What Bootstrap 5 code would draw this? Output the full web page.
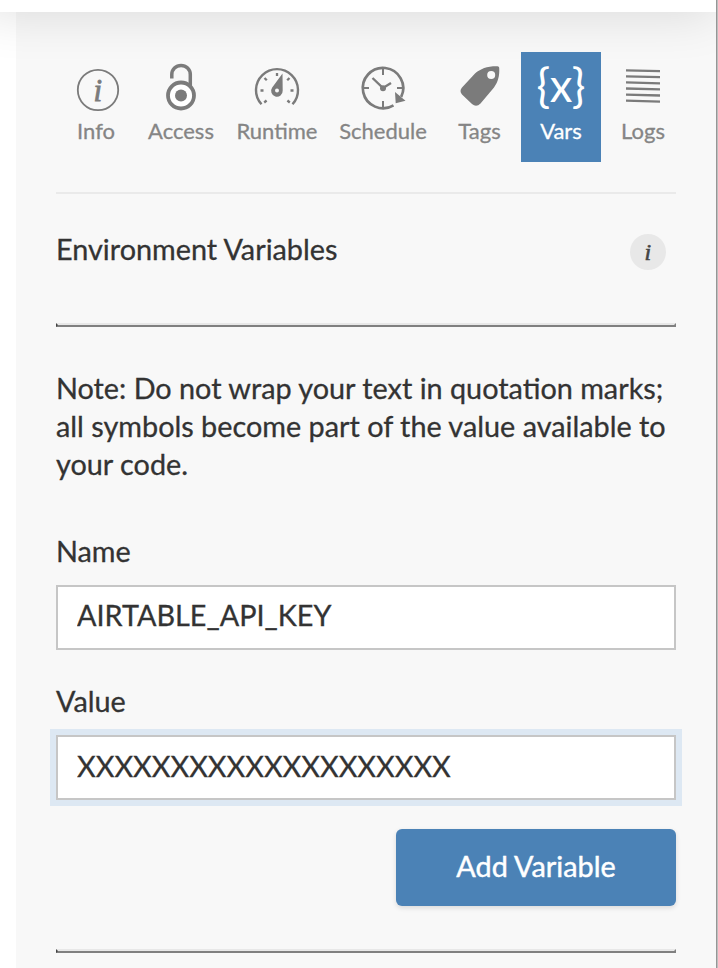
<!DOCTYPE html>
<html lang="en">
<head>
<meta charset="utf-8">
<title>Environment Variables</title>
<link href="https://cdn.jsdelivr.net/npm/bootstrap@5.3.0/dist/css/bootstrap.min.css" rel="stylesheet">
<style>
body{font-family:Lato,sans-serif;font-size:28.8px;line-height:38px;color:#333;background:#fff;height:968px;-webkit-text-stroke:.3px}
.page{height:968px}
.topbar{width:736px;height:132px;margin:-120px 0 0 -20px;z-index:2;box-shadow:0 3px 50px rgba(0,0,0,.12)}
.panel{width:700px;height:956px;margin-left:16px;padding:40px 40px 0;background:#f8f8f8}
.edge{width:2px;right:0;top:0;z-index:3;background:#bfbfbf;border-left:1px solid #969696}
.tabs{height:142px;margin-right:-10px;z-index:3}
.tab{height:110px;color:#858585;font-size:22px;line-height:26px;padding-top:2px;text-decoration:none}
.tab svg{width:60px;height:64px;color:#7b7b7b;-webkit-text-stroke:0}
.tab.on,.tab.on svg{color:#fff}
.tab.on{background:#4b82b6}
.w1{width:80px}.w2{width:90px}.w3{width:102px}.w4{width:110px}.w5{width:83px}.w7{width:84px}
.tabline{height:2px;background:#eaeaea;margin-top:-2px}
.heading{height:129px;padding-top:36px}
.heading h1{font-size:28.8px;line-height:38px;margin:0;font-weight:400}
.help{width:36px;height:36px;margin:4px 10px 0 0}
.bevel{border:2px solid;border-color:#e8e8e8 #808080 #808080 #444;height:4px}
.note{margin:42px 0 0}
.lbl{margin:49px 0 14px;display:block;line-height:39px}
.lbl.second{margin:32px 0 14px}
.field{height:65px;border:2px solid #c6c6c6;border-radius:0;padding:0 19px 5px;font-size:28.8px;line-height:38px;color:#333;background:#fff}
.field.hot{padding-bottom:3px;box-shadow:0 0 0 6px #dde8f3}
.add{width:280px;height:77px;margin:29px 0 43px;padding:0 12px 1px;background:#4b82b6;color:#fff;border:0;border-radius:6px;font-size:28.8px;box-shadow:0 2px 5px rgba(0,0,0,.12);-webkit-text-stroke:.45px}
</style>
<script src="https://cdn.jsdelivr.net/npm/bootstrap@5.3.0/dist/js/bootstrap.bundle.min.js"></script>
</head>
<body class="overflow-hidden">
<div class="page position-relative overflow-hidden d-flex flex-column">
<header class="topbar bg-white position-relative flex-shrink-0"></header>
<main class="panel flex-shrink-0">
<nav class="tabs d-flex position-relative">
<a class="tab w1 d-flex flex-column align-items-center"><svg viewBox="66 54 60 64"><circle cx="98" cy="90" r="20.2" fill="none" stroke="currentColor" stroke-width="1.8"/><text x="93.500" y="100.500" font-family="Liberation Serif" font-style="italic" font-size="31" fill="currentColor" stroke="currentColor" stroke-width=".8">i</text></svg><span>Info</span></a>
<a class="tab w2 d-flex flex-column align-items-center"><svg viewBox="151 54 60 64"><path d="M171.800 78.500V74.500a9.200 9 0 0 1 18.500 0V87" fill="none" stroke="currentColor" stroke-width="3.500"/><circle cx="181" cy="95.500" r="13" fill="#fff" stroke="currentColor" stroke-width="3.800"/><circle cx="181" cy="95.500" r="6" fill="currentColor"/></svg><span>Access</span></a>
<a class="tab w3 d-flex flex-column align-items-center"><svg viewBox="247 54 60 64" fill="none" stroke="currentColor"><path d="M261.500 104.300A21 21 0 1 1 292.500 104.300" stroke-width="2.400"/><path d="M277 73v3M264.500 78l2.300 2.300M289.500 78l-2.300 2.300M260.500 90.500h3M290.500 90.500h3M264.200 102.500l2.400-2M289.800 102.500l-2.400-2" stroke-width="2.300"/><path d="M282.500 73.500L282.700 90.500A5.800 5.800 0 1 1 272.200 87.500Z" fill="currentColor" stroke="none"/><circle cx="277" cy="90.500" r="2" fill="#f8f8f8" stroke="none"/></svg><span>Runtime</span></a>
<a class="tab w4 d-flex flex-column align-items-center"><svg viewBox="353 54 60 64" fill="none" stroke="currentColor"><path d="M393.500 105.300A20.200 20.200 0 1 1 401.200 96.800" stroke-width="2.700"/><path d="M383 69v6M383 101v6M364 88h5M397 88h5" stroke-width="2"/><path d="M372.500 78L383 88L391 83" stroke-width="2.400"/><circle cx="383" cy="88.300" r="3" fill="currentColor" stroke="none"/><path d="M395 92L405.500 100.800L395.700 103.200Z" fill="currentColor" stroke="none"/></svg><span>Schedule</span></a>
<a class="tab w5 d-flex flex-column align-items-center"><svg viewBox="449.500 54 60 64"><path fill="currentColor" d="M497 66.200Q498.700 66.200 498.700 67.800C499.200 76 497.500 82 493.500 87.500L480 103.500Q475.800 107.800 471.500 104L461.500 94.500Q458.500 91 461.500 87.500L474.500 73.500C480 68.500 487 66 497 66.200Z"/><circle cx="490.700" cy="75" r="4" fill="#f8f8f8"/></svg><span>Tags</span></a>
<a class="tab w1 on d-flex flex-column align-items-center"><svg viewBox="531 54 60 64"><text x="561" y="102" text-anchor="middle" font-family="Lato" font-size="45.500" fill="currentColor">{x}</text></svg><span>Vars</span></a>
<a class="tab w7 d-flex flex-column align-items-center"><svg viewBox="613 54 60 64"><path d="M626 70.300l34 .9M626 76.300l34 .9M626 82.400l34 .9M626 88.500l34 .9M626 94.600l34 .9M626 100.700l34 .9" fill="none" stroke="currentColor" stroke-width="2.300"/></svg><span>Logs</span></a>
</nav>
<div class="tabline position-relative"></div>
<section class="heading d-flex justify-content-between align-items-start"><h1>Environment Variables</h1><svg class="help" viewBox="0 0 36 36"><circle cx="18" cy="18" r="18" fill="#e8e8e8"/><text x="14.600" y="26" font-family="Liberation Serif" font-style="italic" font-size="24" fill="#444" stroke="#444" stroke-width=".6">i</text></svg></section>
<div class="bevel"></div>
<p class="note">Note: Do not wrap your text in quotation marks;<br>all symbols become part of the value available to<br>your code.</p>
<label class="lbl" for="name">Name</label>
<input id="name" class="field form-control" value="AIRTABLE_API_KEY">
<label class="lbl second" for="value">Value</label>
<input id="value" class="field hot form-control" value="XXXXXXXXXXXXXXXXXXXX">
<div class="d-flex justify-content-end"><button class="add btn">Add Variable</button></div>
<div class="bevel"></div>
</main>
<div class="edge position-absolute h-100"></div>
</div>
</body>
</html>
